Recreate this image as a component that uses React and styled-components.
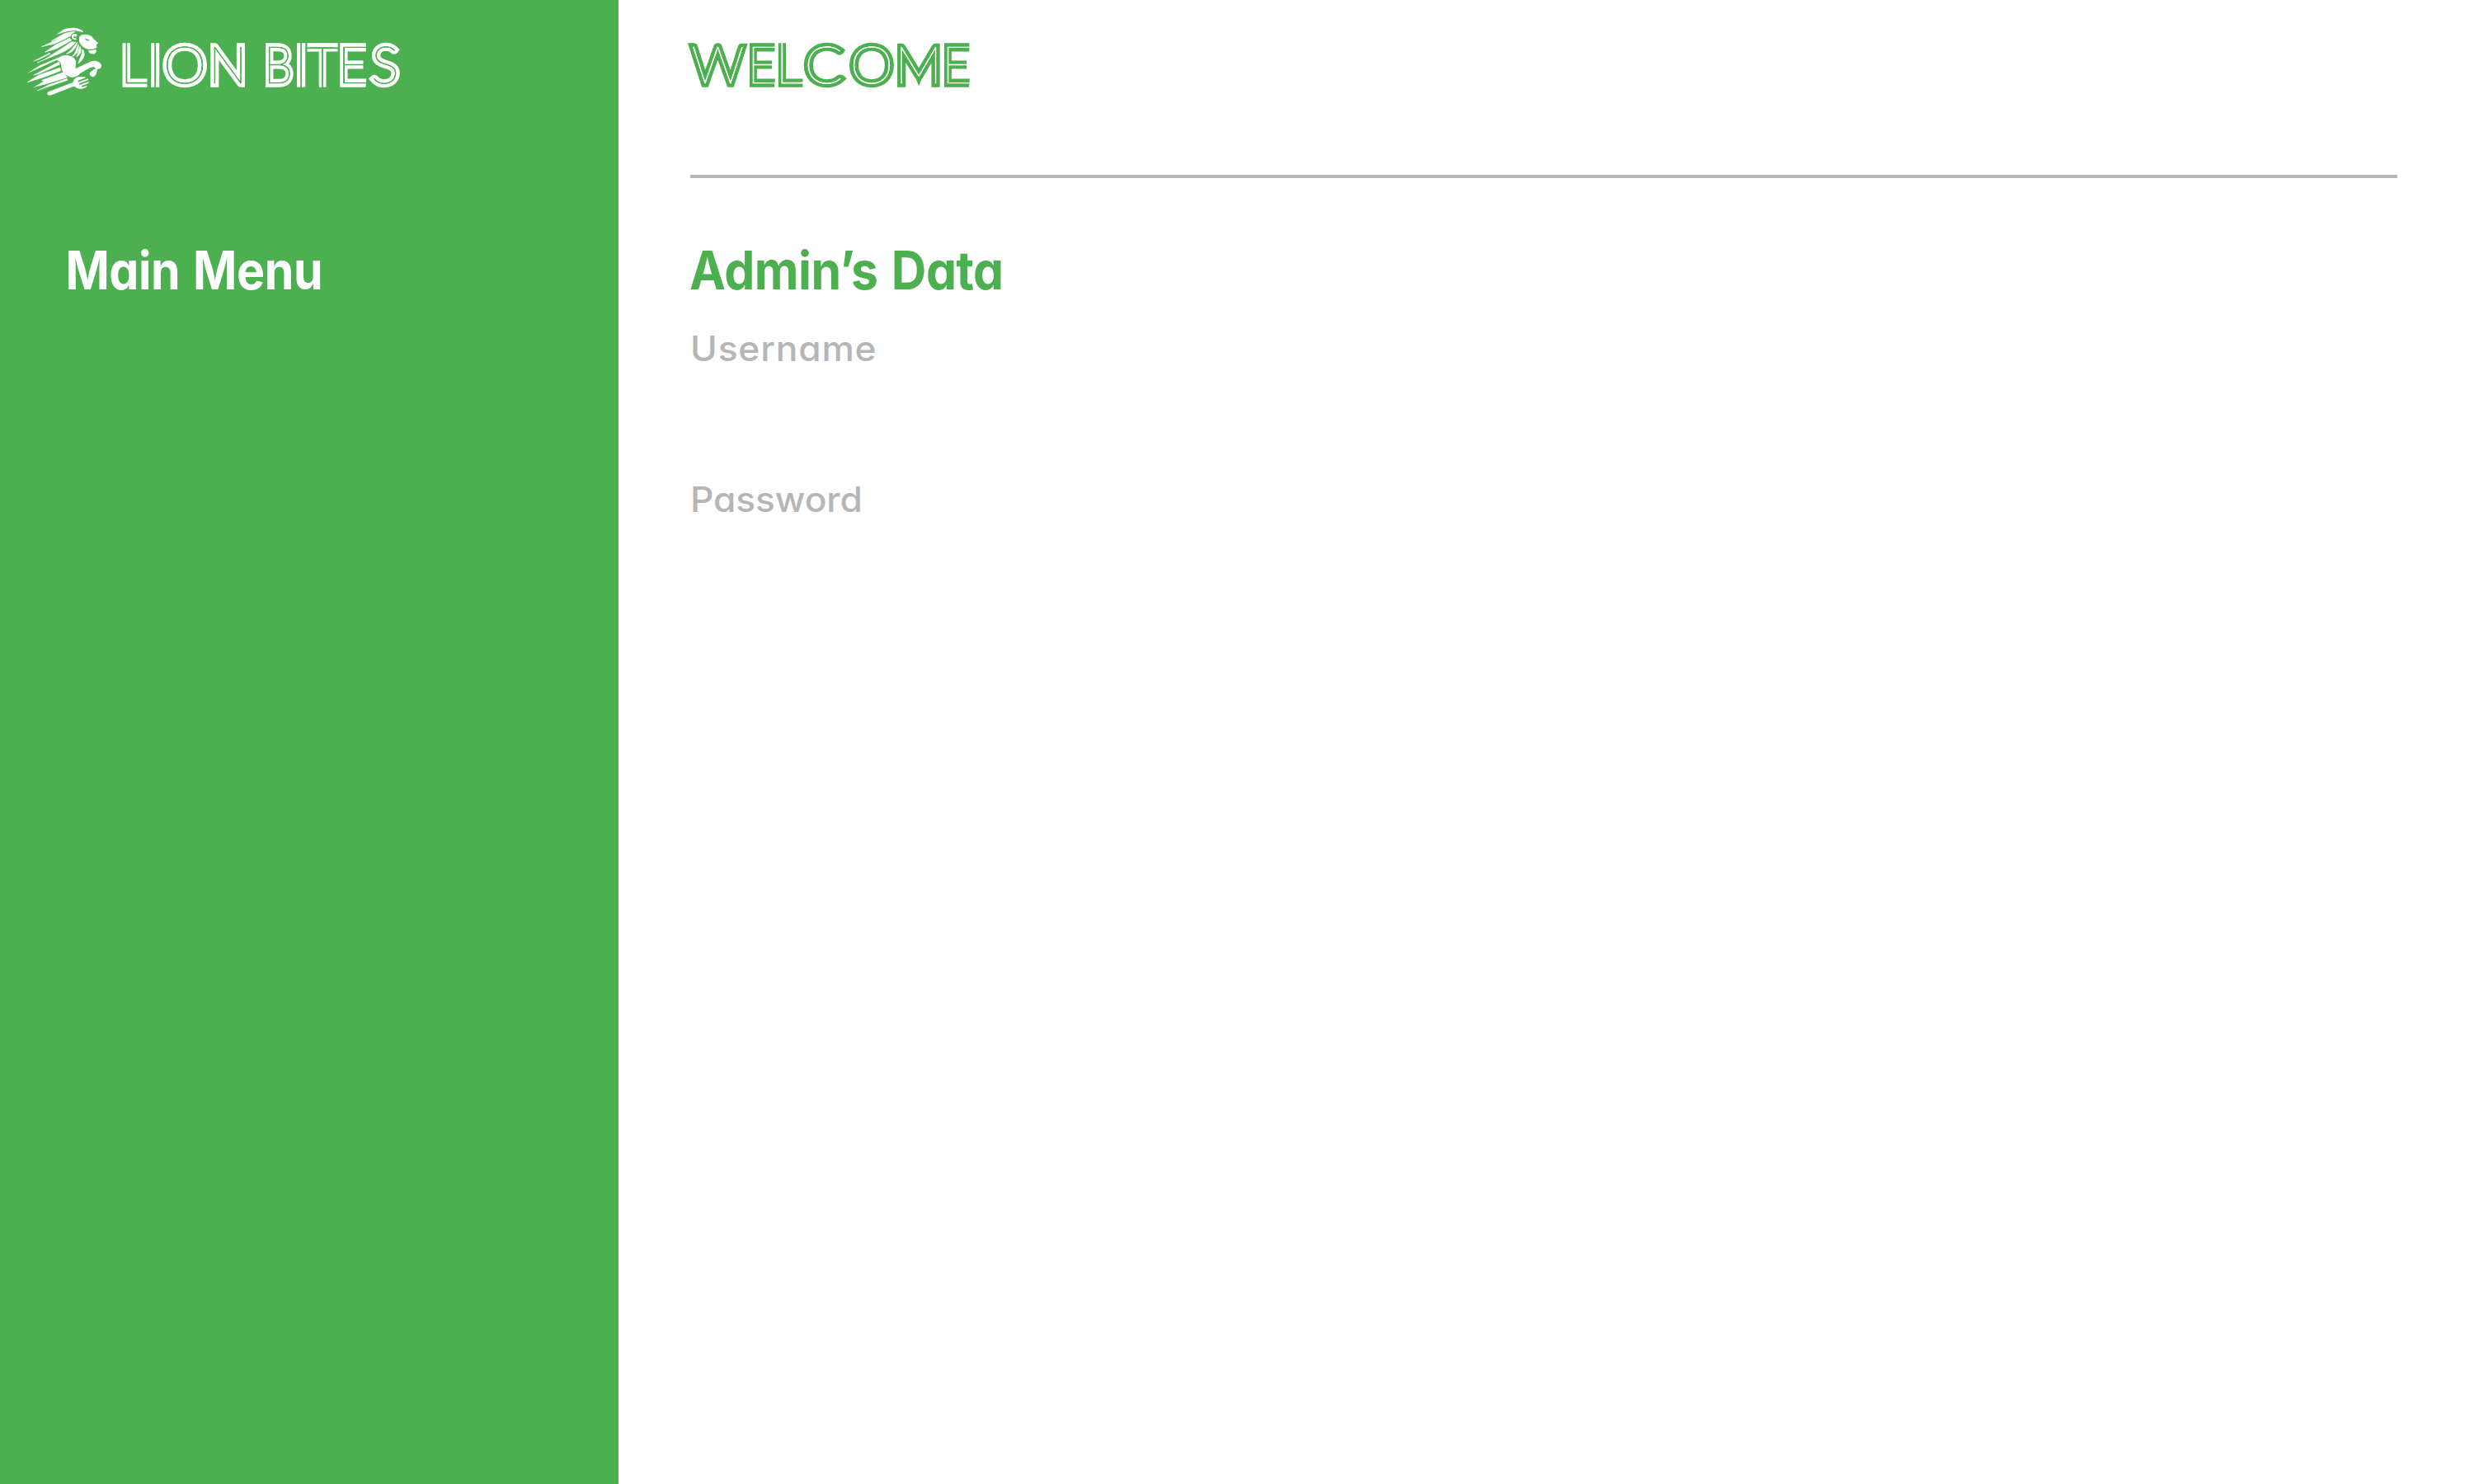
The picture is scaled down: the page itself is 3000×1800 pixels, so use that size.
import React from "react";
import styled, { createGlobalStyle } from "styled-components";

const GREEN = "#4CAF50";
const GREY = "#B6B6B6";

const GlobalStyle = createGlobalStyle`
  * { box-sizing: border-box; }
  body { margin: 0; background: #fff; font-family: Inter, "Liberation Sans", sans-serif; }
`;

const Page = styled.div`
  display: flex;
  width: 3000px;
  height: 1800px;
  background: #fff;
`;

const Sidebar = styled.aside`
  width: 750px;
  height: 100%;
  background: ${GREEN};
`;

const Brand = styled.div`
  display: flex;
  align-items: flex-start;
  height: 212px;
  padding: 20px 0 0 20px;
`;

const LionMark = styled.svg`
  width: 120px;
  height: 110px;
  flex: none;
`;

const Content = styled.main`
  flex: 1;
  padding: 0 93px 0 87px;
`;

const Header = styled.header`
  height: 216px;
  padding-top: 20px;
  border-bottom: 4px solid ${GREY};
`;

const Lettering = styled.div`
  display: flex;
  height: 110px;
  margin: 0 0 0 ${(p) => p.$offset}px;
  font-family: Lato, sans-serif;
  font-size: 62.5px;
  font-weight: 100;
  line-height: 114px;
  white-space: pre;
  color: ${(p) => p.$inline};
  -webkit-text-stroke: 9.4px ${(p) => p.$ink};
  paint-order: stroke fill;
`;

/* The inline of straight letters runs out through the ends of the strokes. */
const openEnds = {
  I: { origin: "50% 59px", scale: "1, 1.26" },
  L: { origin: "6.7px 81px", scale: "1.24, 1.13" },
  E: { origin: "4.8px 59px", scale: "1.25, 1" },
  T: { origin: "50% 37px", scale: "1.3, 1.13" },
};

const Letter = styled.span`
  position: relative;
  display: flex;
  flex: none;
  justify-content: center;
  width: ${(p) => p.$width}px;
  margin-right: ${(p) => p.$gap}px;
  transform: translateX(${(p) => p.$nudge || 0}px) scaleX(${(p) => p.$stretch || 1});

  &::after {
    content: attr(data-char);
    position: absolute;
    inset: 0;
    display: flex;
    justify-content: center;
    -webkit-text-stroke: 0.7px currentColor;
    transform-origin: ${(p) => (p.$open ? p.$open.origin : "50% 50%")};
    transform: scale(${(p) => (p.$open ? p.$open.scale : "1, 1")});
  }
`;

const Title = styled.h2`
  margin: 0;
  padding: ${(p) => p.$pad};
  font-size: 64px;
  line-height: 80px;
  font-weight: 700;
  letter-spacing: ${(p) => p.$tracking}px;
  word-spacing: 3px;
  font-feature-settings: "cv11";
  color: ${(p) => p.$color};
  white-space: nowrap;
  transform: scaleX(${(p) => p.$stretch});
  transform-origin: ${(p) => p.$origin}px 0;
`;

const Field = styled.div`
  height: 183px;
  font-size: 42.4px;
  line-height: 60px;
  font-weight: 500;
  letter-spacing: ${(p) => p.$tracking}px;
  font-feature-settings: "cv11";
  color: ${GREY};
  transform: scaleX(1.045);
  transform-origin: 0 0;
`;

const Fields = styled.section`
  padding-top: 25px;
`;

const brandLetters = [
  ["L", 30, 4, 0.92, -3.3], ["I", 10, 4], ["O", 54, 4, 1.076], ["N", 42, 0], [" ", 25, 0],
  ["B", 34, 4, 0.914, -1.5], ["I", 10, 2], ["T", 38, 2, 0.86], ["E", 32, 3, 0.9, -1.6], ["S", 38, 0, 1.03, 1],
];
const welcomeLetters = [
  ["W", 73, 2, 1.02], ["E", 31, 4, 0.87, -1.8], ["L", 30, -1, 0.91, -3.4], ["C", 53, 4, 1.1, -0.8],
  ["O", 54, 4, 1.08], ["M", 52, 5, 1.02], ["E", 31, 0, 0.87, -1.8],
];

function Word({ letters, ...rest }) {
  return (
    <Lettering {...rest}>
      {letters.map(([char, width, gap, stretch, nudge], i) => (
        <Letter
          key={i}
          data-char={char}
          $width={width}
          $gap={gap}
          $stretch={stretch}
          $nudge={nudge}
          $open={openEnds[char]}
        >
          {char}
        </Letter>
      ))}
    </Lettering>
  );
}

function Lion() {
  return (
    <LionMark viewBox="0 0 360 330" fill="#fff">
      <path d="M243 55 C229 39 195 37 170 48 L145 66 L172 58 C185 53 205 50 222 53 L243 57Z" />
      <path d="M214 56 C200 55 185 58 172 63 L127 89 L155 80 L91 110 L140 99 L196 72 C198 64 205 58 214 56Z" stroke="#fff" strokeWidth="1.5" />
      <path d="M194 79 L143 103 L103 130 L145 117 L200 87Z" stroke="#fff" strokeWidth="2" />
      <path d="M201 70 C204 61 216 61 221 66 L216 76 C211 68 207 70 208 77 L219 80 L216 85 C204 85 199 78 201 70Z" />
      <path d="M228 75 C237 62 257 63 273 72 L284 85 L298 97 L291 103 L292 113 C285 119 272 118 263 120 C247 117 232 105 228 91Z" />
      <path d="M262 123 C272 124 281 121 289 119 C294 129 285 139 275 136 C267 136 262 130 262 123Z" />
      <path d="M57 164 L121 132 L124 136 L80 158Z" />
      <path d="M75 169 L104 155 L201 92 L216 93 C202 112 177 128 151 137Z" stroke="#fff" strokeWidth="1.5" />
      <path d="M221 94 C217 116 201 132 181 137 C198 126 208 111 221 94Z" stroke="#fff" strokeWidth="3" />
      <path d="M225 101 C229 118 219 141 203 145 C216 132 217 117 225 101Z" stroke="#fff" strokeWidth="2" />
      <path d="M231 109 C238 125 234 138 218 147 C225 136 225 124 231 109Z" stroke="#fff" strokeWidth="2" />
      <path d="M240 120 C252 135 246 155 225 171 C229 152 241 141 240 120Z" stroke="#fff" strokeWidth="3" />
      <path d="M160 146 C178 136 204 143 213 156 C221 170 213 179 215 190 L267 165 C285 156 306 164 309 178 C309 189 302 193 294 191 C292 206 288 219 277 220 C267 217 263 208 268 203 C274 198 278 193 288 190 C285 181 276 183 269 186 L235 205 C222 219 203 225 194 220 C174 212 164 201 163 180 C162 169 157 162 146 159 L39 207 L85 178Z" />
      <path d="M62 214 L154 165 L157 175 L84 208Z" stroke="#fff" strokeWidth="1.5" />
      <path d="M40 239 L80 214 L158 187 L161 197 L96 222Z" stroke="#fff" strokeWidth="2" />
      <path d="M61 259 L98 236 L90 232 L172 202 C176 212 182 218 186 222 L110 245Z" />
      <path d="M75 270 L118 248 L184 226 L186 232Z" stroke="#fff" strokeWidth="1" />
      <path d="M116 274 L203 241 C208 238 206 231 212 227 C221 216 239 222 249 219 L251 223 L224 234 L225 239 L260 226 L262 231 L228 244 L229 249 L263 237 L262 243 L236 253 L239 257 L259 251 C251 264 226 268 215 257 C210 253 204 256 198 258 L127 286 C113 291 107 281 116 274Z" />
      <path d="M249 81 Q257 80 267 88 Q255 91 249 81Z" fill={GREEN} />
    </LionMark>
  );
}

export default function App() {
  return (
    <Page>
      <GlobalStyle />
      <Sidebar>
        <Brand>
          <Lion />
          <Word letters={brandLetters} $offset={9} $ink="#fff" $inline={GREEN} />
        </Brand>
        <Title $pad="76px 0 0 79px" $stretch={0.895} $tracking={-0.5} $origin={83} $color="#fff">Main Menu</Title>
      </Sidebar>
      <Content>
        <Header>
          <Word letters={welcomeLetters} $offset={-3} $ink={GREEN} $inline="#fff" />
        </Header>
        <Title $pad="72px 0 0" $stretch={0.92} $tracking={-0.5} $origin={-12} $color={GREEN}>Admin’s Data</Title>
        <Fields>
          <Field $tracking={0.8}>Username</Field>
          <Field $tracking={-0.1}>Password</Field>
        </Fields>
      </Content>
    </Page>
  );
}
